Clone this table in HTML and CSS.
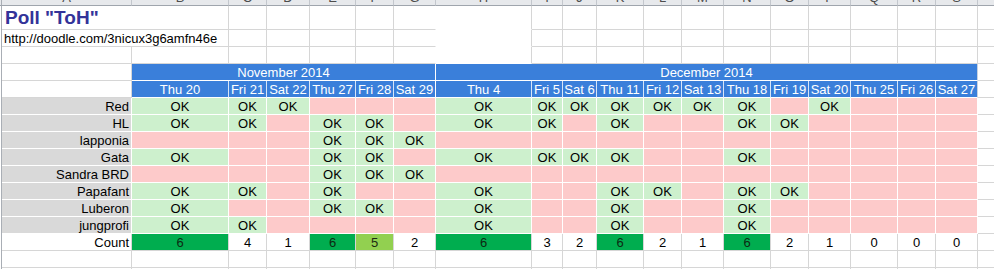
FILE: index.html
```html
<!DOCTYPE html>
<html lang="en">
<head>
<meta charset="utf-8">
<title>Poll "ToH"</title>
<link rel="stylesheet" href="styles.css">
</head>
<body>
<div class="sheet">
  <div class="row hdr"><div class="g"></div><div>A</div><div>B</div><div>C</div><div>D</div><div>E</div><div>F</div><div>G</div><div>H</div><div>I</div><div>J</div><div>K</div><div>L</div><div>M</div><div>N</div><div>O</div><div>P</div><div>Q</div><div>R</div><div>S</div><div>T</div></div>

  <div class="row r1"><div class="g"></div><div class="title s2">Poll "ToH"</div><div></div><div></div><div></div><div></div><div class="ng"></div><div class="wh"></div><div></div><div></div><div></div><div></div><div></div><div></div><div></div><div></div><div></div><div></div><div></div><div></div></div>

  <div class="row"><div class="g"></div><div class="url s2">http://doodle.com/3nicux3g6amfn46e</div><div></div><div></div><div></div><div></div><div class="ng"></div><div class="wh"></div><div></div><div></div><div></div><div></div><div></div><div></div><div></div><div></div><div></div><div></div><div></div><div></div></div>

  <div class="row"><div class="g"></div><div></div><div></div><div></div><div></div><div></div><div></div><div class="ng"></div><div class="wh"></div><div></div><div></div><div></div><div></div><div></div><div></div><div></div><div></div><div></div><div></div><div></div><div></div></div>

  <div class="row"><div class="g"></div><div></div><div class="bl s6">November 2014</div><div class="bl s12 last">December 2014</div><div></div></div>

  <div class="row"><div class="g"></div><div></div><div class="bl d">Thu 20</div><div class="bl d">Fri 21</div><div class="bl d">Sat 22</div><div class="bl d">Thu 27</div><div class="bl d">Fri 28</div><div class="bl">Sat 29</div><div class="bl d">Thu 4</div><div class="bl d">Fri 5</div><div class="bl d">Sat 6</div><div class="bl d">Thu 11</div><div class="bl d">Fri 12</div><div class="bl d">Sat 13</div><div class="bl d">Thu 18</div><div class="bl d">Fri 19</div><div class="bl d">Sat 20</div><div class="bl d">Thu 25</div><div class="bl d">Fri 26</div><div class="bl last">Sat 27</div><div></div></div>

  <div class="row"><div class="g"></div><div class="n">Red</div><div class="y">OK</div><div class="y">OK</div><div class="y">OK</div><div class="x"></div><div class="x"></div><div class="x"></div><div class="y">OK</div><div class="y">OK</div><div class="y">OK</div><div class="y">OK</div><div class="y">OK</div><div class="y">OK</div><div class="y">OK</div><div class="x"></div><div class="y">OK</div><div class="x"></div><div class="x"></div><div class="x"></div><div></div></div>

  <div class="row"><div class="g"></div><div class="n">HL</div><div class="y">OK</div><div class="y">OK</div><div class="x"></div><div class="y">OK</div><div class="y">OK</div><div class="x"></div><div class="y">OK</div><div class="y">OK</div><div class="x"></div><div class="y">OK</div><div class="x"></div><div class="x"></div><div class="y">OK</div><div class="y">OK</div><div class="x"></div><div class="x"></div><div class="x"></div><div class="x"></div><div></div></div>

  <div class="row"><div class="g"></div><div class="n">lapponia</div><div class="x"></div><div class="x"></div><div class="x"></div><div class="y">OK</div><div class="y">OK</div><div class="y">OK</div><div class="x"></div><div class="x"></div><div class="x"></div><div class="x"></div><div class="x"></div><div class="x"></div><div class="x"></div><div class="x"></div><div class="x"></div><div class="x"></div><div class="x"></div><div class="x"></div><div></div></div>

  <div class="row"><div class="g"></div><div class="n">Gata</div><div class="y">OK</div><div class="x"></div><div class="x"></div><div class="y">OK</div><div class="y">OK</div><div class="x"></div><div class="y">OK</div><div class="y">OK</div><div class="y">OK</div><div class="y">OK</div><div class="x"></div><div class="x"></div><div class="y">OK</div><div class="x"></div><div class="x"></div><div class="x"></div><div class="x"></div><div class="x"></div><div></div></div>

  <div class="row"><div class="g"></div><div class="n">Sandra BRD</div><div class="x"></div><div class="x"></div><div class="x"></div><div class="y">OK</div><div class="y">OK</div><div class="y">OK</div><div class="x"></div><div class="x"></div><div class="x"></div><div class="x"></div><div class="x"></div><div class="x"></div><div class="x"></div><div class="x"></div><div class="x"></div><div class="x"></div><div class="x"></div><div class="x"></div><div></div></div>

  <div class="row"><div class="g"></div><div class="n">Papafant</div><div class="y">OK</div><div class="y">OK</div><div class="x"></div><div class="y">OK</div><div class="x"></div><div class="x"></div><div class="y">OK</div><div class="x"></div><div class="x"></div><div class="y">OK</div><div class="y">OK</div><div class="x"></div><div class="y">OK</div><div class="y">OK</div><div class="x"></div><div class="x"></div><div class="x"></div><div class="x"></div><div></div></div>

  <div class="row"><div class="g"></div><div class="n">Luberon</div><div class="y">OK</div><div class="x"></div><div class="x"></div><div class="y">OK</div><div class="y">OK</div><div class="x"></div><div class="y">OK</div><div class="x"></div><div class="x"></div><div class="y">OK</div><div class="x"></div><div class="x"></div><div class="y">OK</div><div class="x"></div><div class="x"></div><div class="x"></div><div class="x"></div><div class="x"></div><div></div></div>

  <div class="row"><div class="g"></div><div class="n">jungprofi</div><div class="y">OK</div><div class="y">OK</div><div class="x"></div><div class="x"></div><div class="x"></div><div class="x"></div><div class="y">OK</div><div class="x"></div><div class="x"></div><div class="y">OK</div><div class="x"></div><div class="x"></div><div class="y">OK</div><div class="x"></div><div class="x"></div><div class="x"></div><div class="x"></div><div class="x"></div><div></div></div>

  <div class="row"><div class="g"></div><div class="cnt">Count</div><div class="hi">6</div><div>4</div><div>1</div><div class="hi">6</div><div class="mid">5</div><div>2</div><div class="hi">6</div><div>3</div><div>2</div><div class="hi">6</div><div>2</div><div>1</div><div class="hi">6</div><div>2</div><div>1</div><div>0</div><div>0</div><div>0</div><div></div></div>

  <div class="row"><div class="g"></div><div></div><div></div><div></div><div></div><div></div><div></div><div></div><div></div><div></div><div></div><div></div><div></div><div></div><div></div><div></div><div></div><div></div><div></div><div></div><div></div></div>

  <div class="row"><div class="g"></div><div></div><div></div><div></div><div></div><div></div><div></div><div></div><div></div><div></div><div></div><div></div><div></div><div></div><div></div><div></div><div></div><div></div><div></div><div></div><div></div></div>
</div>
</body>
</html>
```

FILE: styles.css
```css
* {
  box-sizing: border-box;
  margin: 0;
  padding: 0;
}

body {
  margin: 0;
  background: #ffffff;
  font-family: "Liberation Sans", Arial, sans-serif;
  font-size: 13px;
  color: #000000;
  overflow: hidden;
}

.sheet {
  width: 994px;
  height: 269px;
  overflow: hidden;
}

.row {
  display: grid;
  grid-template-columns: 2px 130px 97px 38px 43px 46px 38px 42px 96px 31px 34px 47px 38px 42px 47px 38px 42px 47px 38px 42px 60px;
  height: 17px;
  width: 1040px;
}

.row > div {
  display: flex;
  align-items: flex-end;
  justify-content: center;
  line-height: 15px;
  white-space: nowrap;
  overflow: hidden;
  border-right: 1px solid #d6d6d6;
  border-bottom: 1px solid #d6d6d6;
}

.row > .g {
  background: #ffffff;
  border-right: 1px solid #a9aeb5;
  border-bottom: none;
}

/* column letters row (mostly cut off) */
.hdr {
  height: 6px;
}

.hdr > div {
  background: #e7e9ec;
  color: #4d4d4d;
  line-height: 14px;
  border-right-color: #c3c7cd;
  border-bottom: 1px solid #9fa5ad;
}

.row.hdr > .g {
  background: #e7e9ec;
  border-bottom: 1px solid #9fa5ad;
}

.r1 {
  height: 24px;
}

.s2 { grid-column: span 2; }
.s6 { grid-column: span 6; }
.s12 { grid-column: span 12; }

.row > .title {
  justify-content: flex-start;
  padding-left: 3px;
  font-size: 19px;
  font-weight: bold;
  line-height: normal;
  color: #333399;
}

.row > .url {
  justify-content: flex-start;
  padding-left: 2px;
}

.row > .ng {
  border-right-color: #ffffff;
}

.row > .wh {
  border-bottom-color: #ffffff;
}

/* blue header cells */
.row > .bl {
  background: #3a7fda;
  color: #ffffff;
  border-right-color: #ffffff;
  border-bottom-color: #ffffff;
}

.row > .bl.d {
  border-right-color: #d7e5f7;
}

.row > .bl.last {
  border-right-color: #c7d2e0;
}

/* participant names */
.row > .n {
  justify-content: flex-end;
  padding-right: 2px;
  background: #d9d9d9;
  border-right-color: #ffffff;
  border-bottom-color: #ffffff;
}

.row > .y {
  background: #cdf0cd;
  border-right-color: #ffffff;
  border-bottom-color: #ffffff;
}

.row > .x {
  background: #fdcaca;
  border-right-color: #ffffff;
  border-bottom-color: #ffffff;
}

.row > .cnt {
  justify-content: flex-end;
  padding-right: 2px;
}

.row > .hi {
  background: #00ad4f;
  color: #0d2a12;
}

.row > .mid {
  background: #92d050;
  color: #1c2a10;
}
```
